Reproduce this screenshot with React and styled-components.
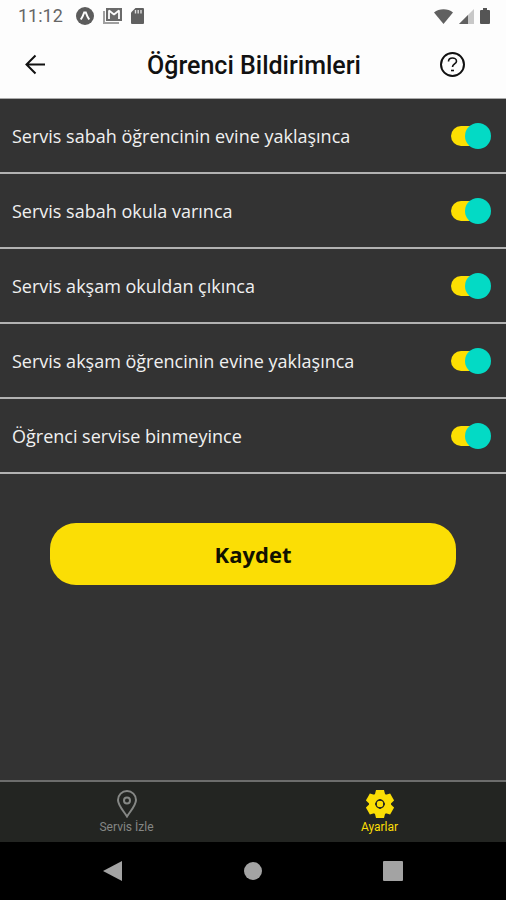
import React, { useState } from 'react';
import styled, { createGlobalStyle } from 'styled-components';

const GlobalStyle = createGlobalStyle`
  * {
    box-sizing: border-box;
  }
  body {
    margin: 0;
    background: #333333;
  }
`;

const Screen = styled.div`
  display: flex;
  flex-direction: column;
  min-height: 100vh;
  background: #333333;
  font-family: 'Open Sans', 'Noto Sans', sans-serif;
`;

const StatusBar = styled.div`
  display: flex;
  align-items: center;
  justify-content: space-between;
  height: 32px;
  padding: 0 16px 0 18px;
  background: #fdfdfd;
  color: #666666;
  font: 18px/32px Roboto, sans-serif;
`;

const StatusGroup = styled.div`
  display: flex;
  align-items: center;
  gap: ${props => props.$gap};

  svg {
    display: block;
  }
`;

const Time = styled.span`
  margin-right: 4px;
`;

const Header = styled.header`
  display: grid;
  grid-template-columns: 48px 1fr 28px;
  align-items: center;
  height: 67px;
  padding: 0 39px 0 21px;
  background: #fdfdfd;
  border-bottom: 1px solid #aaaaaa;
`;

const Title = styled.h1`
  margin: 0;
  padding-top: 2px;
  text-align: center;
  color: #111111;
  font: 500 25px/32px Roboto, sans-serif;
`;

const IconButton = styled.button`
  display: block;
  width: 28px;
  height: 28px;
  padding: 0;
  border: 0;
  background: none;
  cursor: pointer;

  svg {
    display: block;
  }
`;

const Main = styled.main`
  flex: 1;
`;

const Row = styled.label`
  display: flex;
  align-items: center;
  justify-content: space-between;
  height: 75px;
  padding: 0 15px 0 12px;
  border-bottom: 2px solid #b2b2b2;
  color: #f0f0f0;
  font-size: 18px;
  line-height: 24px;
  cursor: pointer;
`;

const Toggle = styled.input`
  appearance: none;
  display: grid;
  align-items: center;
  width: 40px;
  height: 26px;
  margin: 0;
  cursor: pointer;

  &::before,
  &::after {
    content: '';
    grid-area: 1 / 1;
  }
  &::before {
    width: 36px;
    height: 20px;
    border-radius: 10px;
    background: #777777;
  }
  &::after {
    width: 26px;
    height: 26px;
    border-radius: 50%;
    background: #cccccc;
  }
  &:checked::before {
    background: #fddf02;
  }
  &:checked::after {
    justify-self: end;
    background: #03dac5;
  }
`;

const Actions = styled.div`
  padding: 49px 50px;
`;

const SaveButton = styled.button`
  display: block;
  width: 100%;
  height: 62px;
  border: 0;
  border-radius: 26px;
  background: #fbde05;
  color: #111100;
  font: 700 22px/30px 'Open Sans', 'Noto Sans', sans-serif;
  cursor: pointer;
`;

const TabBar = styled.nav`
  display: flex;
  height: 62px;
  border-top: 2px solid #6c6d6c;
  background: #232522;
`;

const Tab = styled.a`
  flex: 1;
  display: flex;
  flex-direction: column;
  align-items: center;
  padding-top: 8px;
  color: ${props => (props.$active ? '#fbde05' : '#858785')};
  font: 12px/18px Roboto, sans-serif;
  text-decoration: none;

  svg {
    display: block;
  }
`;

const SystemNav = styled.div`
  display: flex;
  justify-content: space-around;
  align-items: center;
  height: 58px;
  padding: 0 43px;
  background: #000000;
`;

const notifications = [
  'Servis sabah öğrencinin evine yaklaşınca',
  'Servis sabah okula varınca',
  'Servis akşam okuldan çıkınca',
  'Servis akşam öğrencinin evine yaklaşınca',
  'Öğrenci servise binmeyince',
];

const StatusIcons = () => (
  <>
    <svg width="18" height="18" viewBox="0 0 18 18">
      <circle cx="9" cy="9" r="9" fill="#5c5c5c" />
      <path d="M4.800 12.500C6.500 10 7.500 7.500 8.200 5.500h1.600c.7 2 1.700 4.500 3.400 7" fill="none" stroke="#fdfdfd" strokeWidth="2" />
    </svg>
    <svg width="19" height="16" viewBox="0 0 19 16">
      <path d="M1 3v12h15" fill="none" stroke="#a0a0a0" strokeWidth="2" />
      <path d="M3 0h16v13H3z" fill="#6a6a6a" />
      <path d="M6 11V2.500L11 6.500l5-4V11" fill="none" stroke="#fdfdfd" strokeWidth="1.800" strokeLinejoin="bevel" />
    </svg>
    <svg width="13" height="16" viewBox="0 0 13 16">
      <path d="M4.500 0H12a1 1 0 0 1 1 1v14a1 1 0 0 1-1 1H1a1 1 0 0 1-1-1V4.500z" fill="#606060" />
      <path d="M4.500 2v3.500M7.200 2v3.500M10 2v3.500" stroke="#dddddd" strokeWidth="1.400" />
    </svg>
  </>
);

const SignalIcons = () => (
  <>
    <svg width="19" height="15" viewBox="0 0 19 15">
      <path d="M9.500 15 0 3.500C5-.8 14-.8 19 3.500z" fill="#606060" />
    </svg>
    <svg width="15" height="15" viewBox="0 0 15 15">
      <path d="M15 0v15H0z" fill="#c8c8c8" />
      <path d="M9 6v9H0z" fill="#606060" />
    </svg>
    <svg width="10" height="16" viewBox="0 0 10 16">
      <path d="M3 0h4v2h2a1 1 0 0 1 1 1v12a1 1 0 0 1-1 1H1a1 1 0 0 1-1-1V3a1 1 0 0 1 1-1h2z" fill="#555555" />
    </svg>
  </>
);

const BackArrow = () => (
  <svg width="28" height="28" viewBox="0 0 28 28">
    <path d="M24 13.500H6M14.500 4.500l-9 9 9 9" fill="none" stroke="#111" strokeWidth="2" />
  </svg>
);

const HelpIcon = () => (
  <svg width="28" height="28" viewBox="0 0 28 28" fill="none" stroke="#111">
    <circle cx="13.500" cy="13.500" r="11.500" strokeWidth="2" />
    <path d="M9.500 10.500c0-2.400 2-3.500 4-3.500s4 1.200 4 3.200c0 2.600-4 3-4 5.800" strokeWidth="1.600" />
    <path d="M12 19.500h3" strokeWidth="1.600" />
  </svg>
);

const PinIcon = () => (
  <svg width="28" height="28" viewBox="0 0 28 28" fill="none" stroke="currentColor" strokeWidth="2">
    <path d="M14 26.500C11 21.500 5 15.500 5 10a9 9 0 0 1 18 0c0 5.500-6 11.500-9 16.500z" />
    <circle cx="14" cy="10.500" r="3" />
  </svg>
);

const GearIcon = () => (
  <svg width="28" height="28" viewBox="0 0 28 28">
    <circle cx="14" cy="14" r="11" fill="currentColor" />
    {[0, 60, 120].map(angle => (
      <path
        key={angle}
        d="M10 0h8l1.500 6v16L18 28h-8l-1.500-6V6z"
        fill="currentColor"
        transform={`rotate(${angle} 14 14)`}
      />
    ))}
    <circle cx="14" cy="14" r="4" fill="none" stroke="#232522" strokeWidth="1.500" />
    <path d="M14 9v2M14 17v2M9 14h2M17 14h2" stroke="#232522" strokeWidth="1.500" />
  </svg>
);

const App = () => {
  const [enabled, setEnabled] = useState(notifications.map(() => true));

  const onToggle = index => {
    setEnabled(enabled.map((value, i) => (i === index ? !value : value)));
  };

  return (
    <Screen>
      <GlobalStyle />
      <StatusBar>
        <StatusGroup $gap="9px">
          <Time>11:12</Time>
          <StatusIcons />
        </StatusGroup>
        <StatusGroup $gap="6px">
          <SignalIcons />
        </StatusGroup>
      </StatusBar>
      <Header>
        <IconButton type="button" aria-label="Geri">
          <BackArrow />
        </IconButton>
        <Title>Öğrenci Bildirimleri</Title>
        <IconButton type="button" aria-label="Yardım">
          <HelpIcon />
        </IconButton>
      </Header>
      <Main>
        {notifications.map((text, index) => (
          <Row key={text}>
            {text}
            <Toggle type="checkbox" checked={enabled[index]} onChange={() => onToggle(index)} />
          </Row>
        ))}
        <Actions>
          <SaveButton type="button">Kaydet</SaveButton>
        </Actions>
      </Main>
      <TabBar>
        <Tab href="#servis">
          <PinIcon />
          Servis İzle
        </Tab>
        <Tab href="#ayarlar" $active>
          <GearIcon />
          Ayarlar
        </Tab>
      </TabBar>
      <SystemNav>
        <IconButton type="button" aria-label="Önceki">
          <svg width="28" height="28" viewBox="0 0 28 28">
            <path d="M4 14 23 4v20z" fill="#a3a3a3" />
          </svg>
        </IconButton>
        <IconButton type="button" aria-label="Ana ekran">
          <svg width="28" height="28" viewBox="0 0 28 28">
            <circle cx="14" cy="14" r="9" fill="#a3a3a3" />
          </svg>
        </IconButton>
        <IconButton type="button" aria-label="Son uygulamalar">
          <svg width="28" height="28" viewBox="0 0 28 28">
            <rect x="4" y="4" width="20" height="20" rx="1" fill="#a3a3a3" />
          </svg>
        </IconButton>
      </SystemNav>
    </Screen>
  );
};

export default App;
